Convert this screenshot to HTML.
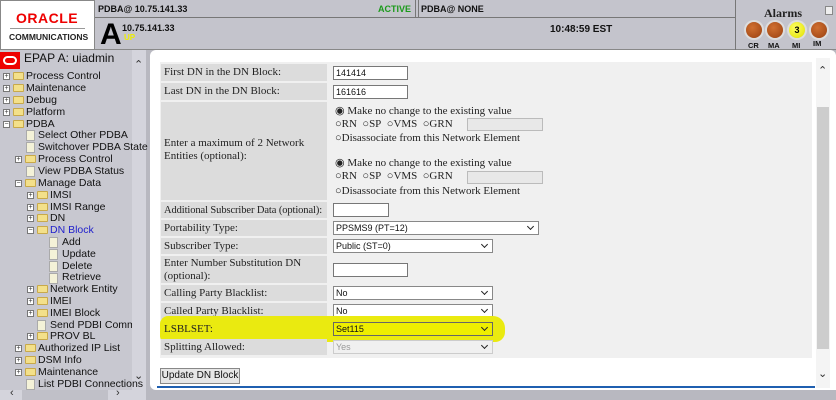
<!DOCTYPE html>
<html><head><meta charset="utf-8"><style>
*{margin:0;padding:0;box-sizing:border-box}
body{width:836px;height:400px;overflow:hidden;background:#b8b8c0;font-family:"Liberation Sans",Arial,sans-serif;position:relative}
.a{position:absolute}
.hdr{left:0;top:0;width:836px;height:50px;background:#c4c4cc;border-bottom:1px solid #888}
.b{font-weight:bold;font-size:9px;color:#111}
.nav{left:0;top:50px;width:146px;height:340px;background:#c8c8d0}
.t{position:absolute;font-size:10.5px;color:#111;white-space:nowrap;line-height:12px}
.ex{position:absolute;width:7px;height:7px;border:1px solid #777;background:#fff;font-size:7px;line-height:5px;text-align:center;color:#333}
.fo{position:absolute;width:11px;height:8px;background:#f3e08a;border:1px solid #c8a94a;border-radius:1px}
.pg{position:absolute;width:9px;height:11px;background:#f4f2d8;border:1px solid #aaa}
.main{left:150px;top:50px;width:686px;height:340px;background:#fff;border-radius:6px 6px 0 6px}
.panel{left:160px;top:62px;width:652px;height:296px;background:#f0f0f0}
.lab{position:absolute;left:161px;width:166px;background:#dcdcdc;font-family:"Liberation Serif",serif;font-size:11px;color:#222;padding-left:3px;line-height:13px;white-space:nowrap}
.inp{position:absolute;height:14px;border:1px solid #777;background:#fff;font-size:9px;padding-left:2px;line-height:12px;color:#111}
.sel{position:absolute;height:14px;border:1px solid #888;background:#fff;font-size:9px;padding-left:2px;line-height:12px;color:#111}
.sel:after{content:"";position:absolute;right:5px;top:2px;width:4px;height:4px;border-right:1.5px solid #222;border-bottom:1.5px solid #222;transform:rotate(45deg)}
.r{position:absolute;font-family:"Liberation Serif",serif;font-size:11px;color:#222;white-space:nowrap;line-height:13px}
.led{position:absolute;top:22px;width:16px;height:16px;border-radius:50%;background:radial-gradient(circle at 40% 35%,#d07030,#9a4010);box-shadow:0 0 0 2px #ddd}
</style></head><body>
<div class="a hdr"></div>
<div class="a" style="left:0;top:0;width:95px;height:50px;background:#fff;border:1px solid #888"></div>
<div class="a" style="left:16px;top:10px;font-size:14px;font-weight:bold;color:#e00;letter-spacing:0.5px">ORACLE</div>
<div class="a" style="left:10px;top:28px;width:75px;height:1px;background:#999"></div>
<div class="a" style="left:9px;top:32px;font-size:8.5px;font-weight:bold;color:#222">COMMUNICATIONS</div>
<div class="a" style="left:95px;top:17px;width:640px;height:1px;background:#777"></div>
<div class="a" style="left:415px;top:0;width:4px;height:17px;border-left:1px solid #777;border-right:1px solid #777"></div>
<div class="a" style="left:735px;top:0;width:1px;height:50px;background:#777"></div>
<div class="a b" style="left:98px;top:4px">PDBA@ 10.75.141.33</div>
<div class="a b" style="left:378px;top:4px;color:#1a9a1a">ACTIVE</div>
<div class="a b" style="left:421px;top:4px">PDBA@ NONE</div>
<div class="a" style="left:100px;top:18px;font-size:30px;font-weight:bold;color:#000">A</div>
<div class="a b" style="left:122px;top:23px">10.75.141.33</div>
<div class="a b" style="left:124px;top:33px;color:#ee0;font-size:8px">UP</div>
<div class="a b" style="left:550px;top:24px;font-size:10px">10:48:59 EST</div>
<div class="a" style="left:764px;top:6px;font-family:'Liberation Serif',serif;font-weight:bold;font-size:12px;color:#222">Alarms</div>
<div class="a" style="left:825px;top:6px;width:8px;height:9px;background:#eee;border:1px solid #888"></div>
<div class="led" style="left:746px"></div>
<div class="led" style="left:767px"></div>
<div class="led" style="left:789px;background:radial-gradient(circle at 40% 35%,#ffff60,#e0e000);font-size:9px;font-weight:bold;text-align:center;line-height:16px">3</div>
<div class="led" style="left:811px"></div>
<div class="a b" style="left:748px;top:41px;font-size:7.5px">CR</div>
<div class="a b" style="left:768px;top:41px;font-size:7.5px">MA</div>
<div class="a b" style="left:792px;top:41px;font-size:7.5px">MI</div>
<div class="a b" style="left:813px;top:39px;font-size:7.5px">IM</div>

<div class="a nav"></div>
<div class="a" style="left:132px;top:50px;width:14px;height:340px;background:#d4d4dc"></div>
<div class="a" style="left:134px;top:58px;font-size:11px;color:#333">&#8963;</div>
<div class="a" style="left:134px;top:368px;font-size:11px;color:#333;transform:rotate(180deg)">&#8963;</div>
<div class="a" style="left:0;top:390px;width:146px;height:10px;background:#d4d4dc"></div>
<div class="a" style="left:22px;top:390px;width:86px;height:10px;background:#c0c0c8"></div>
<div class="a" style="left:10px;top:387px;font-size:11px;color:#333">&#8249;</div>
<div class="a" style="left:116px;top:387px;font-size:11px;color:#333">&#8250;</div>
<div class="a" style="left:0;top:52px;width:20px;height:17px;background:#e00"></div>
<div class="a" style="left:3px;top:56px;width:14px;height:9px;border:2.5px solid #fff;border-radius:5px"></div>
<div class="t" style="left:24px;top:52px;font-size:12px">EPAP A: uiadmin</div>

<div class="ex" style="left:3px;top:73px">+</div><div class="fo" style="left:13px;top:72px"></div><div class="t" style="left:26px;top:70px">Process Control</div>
<div class="ex" style="left:3px;top:85px">+</div><div class="fo" style="left:13px;top:84px"></div><div class="t" style="left:26px;top:82px">Maintenance</div>
<div class="ex" style="left:3px;top:97px">+</div><div class="fo" style="left:13px;top:96px"></div><div class="t" style="left:26px;top:94px">Debug</div>
<div class="ex" style="left:3px;top:109px">+</div><div class="fo" style="left:13px;top:108px"></div><div class="t" style="left:26px;top:106px">Platform</div>
<div class="ex" style="left:3px;top:121px">−</div><div class="fo" style="left:13px;top:120px"></div><div class="t" style="left:26px;top:118px">PDBA</div>
<div class="pg" style="left:26px;top:130px"></div><div class="t" style="left:38px;top:129px">Select Other PDBA</div>
<div class="pg" style="left:26px;top:142px"></div><div class="t" style="left:38px;top:141px">Switchover PDBA State</div>
<div class="ex" style="left:15px;top:156px">+</div><div class="fo" style="left:25px;top:155px"></div><div class="t" style="left:38px;top:153px">Process Control</div>
<div class="pg" style="left:26px;top:166px"></div><div class="t" style="left:38px;top:165px">View PDBA Status</div>
<div class="ex" style="left:15px;top:180px">−</div><div class="fo" style="left:25px;top:179px"></div><div class="t" style="left:38px;top:177px">Manage Data</div>
<div class="ex" style="left:27px;top:192px">+</div><div class="fo" style="left:37px;top:191px"></div><div class="t" style="left:50px;top:189px">IMSI</div>
<div class="ex" style="left:27px;top:204px">+</div><div class="fo" style="left:37px;top:203px"></div><div class="t" style="left:50px;top:201px">IMSI Range</div>
<div class="ex" style="left:27px;top:215px">+</div><div class="fo" style="left:37px;top:214px"></div><div class="t" style="left:50px;top:212px">DN</div>
<div class="ex" style="left:27px;top:227px">−</div><div class="fo" style="left:37px;top:226px"></div><div class="t" style="left:50px;top:224px;color:#22c">DN Block</div>
<div class="pg" style="left:49px;top:237px"></div><div class="t" style="left:62px;top:236px">Add</div>
<div class="pg" style="left:49px;top:249px"></div><div class="t" style="left:62px;top:248px">Update</div>
<div class="pg" style="left:49px;top:261px"></div><div class="t" style="left:62px;top:260px">Delete</div>
<div class="pg" style="left:49px;top:273px"></div><div class="t" style="left:62px;top:271px">Retrieve</div>
<div class="ex" style="left:27px;top:286px">+</div><div class="fo" style="left:37px;top:285px"></div><div class="t" style="left:50px;top:283px">Network Entity</div>
<div class="ex" style="left:27px;top:298px">+</div><div class="fo" style="left:37px;top:297px"></div><div class="t" style="left:50px;top:295px">IMEI</div>
<div class="ex" style="left:27px;top:310px">+</div><div class="fo" style="left:37px;top:309px"></div><div class="t" style="left:50px;top:307px">IMEI Block</div>
<div class="pg" style="left:37px;top:320px"></div><div class="t" style="left:50px;top:319px;width:82px;overflow:hidden">Send PDBI Command</div>
<div class="ex" style="left:27px;top:333px">+</div><div class="fo" style="left:37px;top:332px"></div><div class="t" style="left:50px;top:330px">PROV BL</div>
<div class="ex" style="left:15px;top:345px">+</div><div class="fo" style="left:25px;top:344px"></div><div class="t" style="left:38px;top:342px">Authorized IP List</div>
<div class="ex" style="left:15px;top:357px">+</div><div class="fo" style="left:25px;top:356px"></div><div class="t" style="left:38px;top:354px">DSM Info</div>
<div class="ex" style="left:15px;top:369px">+</div><div class="fo" style="left:25px;top:368px"></div><div class="t" style="left:38px;top:366px">Maintenance</div>
<div class="pg" style="left:26px;top:379px"></div><div class="t" style="left:38px;top:378px">List PDBI Connections</div>

<div class="a main"></div>
<div class="a panel"></div>
<div class="a" style="left:816px;top:58px;width:14px;height:330px;background:#f4f4f4"></div>
<div class="a" style="left:817px;top:107px;width:12px;height:242px;background:#cdcdcd"></div>
<div class="a" style="left:818px;top:64px;font-size:11px;color:#333">&#8963;</div>
<div class="a" style="left:818px;top:366px;font-size:11px;color:#333;transform:rotate(180deg)">&#8963;</div>

<div class="lab" style="top:64px;height:17px;padding-top:2px">First DN in the DN Block:</div>
<div class="inp" style="left:333px;top:66px;width:75px">141414</div>
<div class="lab" style="top:83px;height:17px;padding-top:2px">Last DN in the DN Block:</div>
<div class="inp" style="left:333px;top:85px;width:75px">161616</div>
<div class="lab" style="top:102px;height:98px;padding-top:35px;white-space:normal">Enter a maximum of 2 Network Entities (optional):</div>
<div class="r" style="left:335px;top:105px">◉ Make no change to the existing value</div>
<div class="r" style="left:335px;top:118px">○RN&nbsp; ○SP&nbsp; ○VMS&nbsp; ○GRN</div>
<div class="a" style="left:467px;top:118px;width:76px;height:13px;background:#e8e8e8;border:1px solid #bbb"></div>
<div class="r" style="left:335px;top:132px">○Disassociate from this Network Element</div>
<div class="r" style="left:335px;top:157px">◉ Make no change to the existing value</div>
<div class="r" style="left:335px;top:170px">○RN&nbsp; ○SP&nbsp; ○VMS&nbsp; ○GRN</div>
<div class="a" style="left:467px;top:171px;width:76px;height:13px;background:#e8e8e8;border:1px solid #bbb"></div>
<div class="r" style="left:335px;top:185px">○Disassociate from this Network Element</div>
<div class="lab" style="top:202px;height:16px;padding-top:2px;font-size:10.5px;letter-spacing:-0.1px">Additional Subscriber Data (optional):</div>
<div class="inp" style="left:333px;top:203px;width:56px"></div>
<div class="lab" style="top:220px;height:16px;padding-top:2px">Portability Type:</div>
<div class="sel" style="left:333px;top:221px;width:206px">PPSMS9 (PT=12)</div>
<div class="lab" style="top:238px;height:16px;padding-top:2px">Subscriber Type:</div>
<div class="sel" style="left:333px;top:239px;width:160px">Public (ST=0)</div>
<div class="lab" style="top:256px;height:27px;padding-top:1px">Enter Number Substitution DN<br>(optional):</div>
<div class="inp" style="left:333px;top:263px;width:75px"></div>
<div class="lab" style="top:285px;height:16px;padding-top:2px">Calling Party Blacklist:</div>
<div class="sel" style="left:333px;top:286px;width:160px">No</div>
<div class="lab" style="top:303px;height:16px;padding-top:2px">Called Party Blacklist:</div>
<div class="sel" style="left:333px;top:304px;width:160px">No</div>
<div class="a" style="left:160px;top:316px;width:345px;height:26px;background:#eaea10;border-radius:8px 12px 10px 6px"></div>
<div class="lab" style="top:321px;height:16px;padding-top:2px;background:transparent">LSBLSET:</div>
<div class="sel" style="left:333px;top:322px;width:160px;background:#ee0;border-color:#666">Set115</div>
<div class="lab" style="top:339px;height:16px;padding-top:2px">Splitting Allowed:</div>
<div class="sel" style="left:333px;top:340px;width:160px;background:#f0f0f0;border-color:#ccc;color:#999">Yes</div>
<div class="a" style="left:160px;top:368px;width:80px;height:16px;background:#e6e6e6;border:1px solid #888;font-size:10px;text-align:center;line-height:14px;color:#111">Update DN Block</div>
<div class="a" style="left:157px;top:386px;width:658px;height:2px;background:#1f5fb0"></div>
</body></html>
